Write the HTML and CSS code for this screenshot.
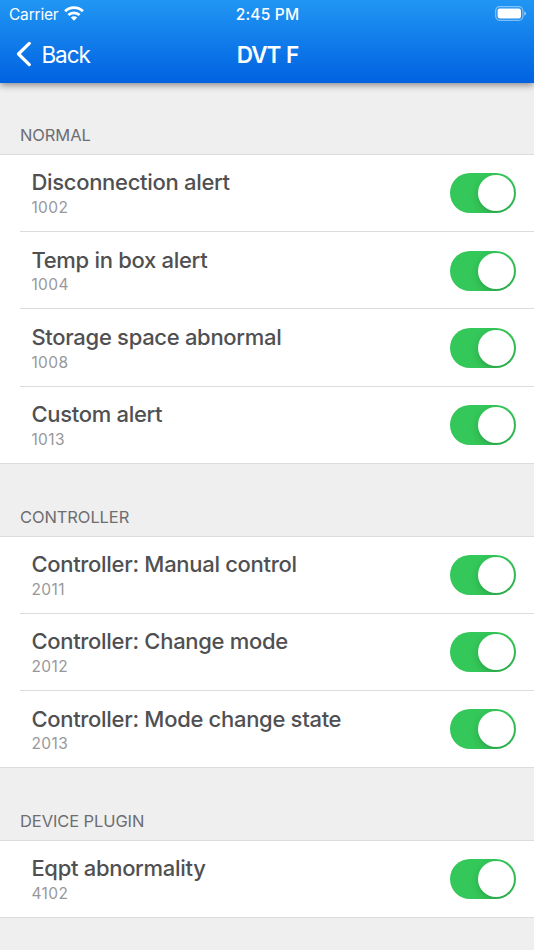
FILE: index.html
```html
<!DOCTYPE html>
<html lang="en">
<head>
<meta charset="utf-8">
<meta name="viewport" content="width=device-width, initial-scale=1">
<title>DVT F</title>
<link rel="stylesheet" href="styles.css">
</head>
<body>
<header class="top">
  <div class="status">
    <div class="carrier"><span class="carrier-name">Carrier</span>
      <svg class="wifi" width="20" height="15" viewBox="0 0 20 15" fill="none" stroke="#fff" stroke-width="2.8"><path d="M1.1 5.3a12.7 12.7 0 0 1 17.8 0"/><path d="M4.4 9.1a8.1 8.1 0 0 1 11.2 0"/><path d="M10 14.7L6.8 11.6a4.6 4.6 0 0 1 6.4 0z" fill="#fff" stroke="none"/></svg>
    </div>
    <div class="time">2:45 PM</div>
    <svg class="battery" width="32" height="15" viewBox="0 0 32 15"><rect x=".7" y=".7" width="27.2" height="13.6" rx="4" fill="none" stroke="#fff" stroke-opacity=".45" stroke-width="1.2"/><rect x="2.6" y="2.6" width="23.4" height="9.8" rx="2.2" fill="#fff"/><path d="M29.2 5.2q2 .7 2 2.3t-2 2.3z" fill="#fff" fill-opacity=".5"/></svg>
  </div>
  <nav class="nav">
    <a class="back"><svg width="16" height="26" viewBox="0 0 16 26" fill="none" stroke="#fff" stroke-width="3.2" stroke-linecap="round" stroke-linejoin="round"><path d="M14.3 2.4L3.5 13l10.8 10.6"/></svg><span class="back-label">Back</span></a>
    <h1 class="title">DVT F</h1>
  </nav>
</header>
<main>
  <section>
    <h2 class="heading first">NORMAL</h2>
    <ul class="list">
      <li class="row"><div class="info"><p class="name">Disconnection alert</p><p class="code">1002</p></div><span class="switch"></span></li>
      <li class="row"><div class="info"><p class="name">Temp in box alert</p><p class="code">1004</p></div><span class="switch"></span></li>
      <li class="row"><div class="info"><p class="name">Storage space abnormal</p><p class="code">1008</p></div><span class="switch"></span></li>
      <li class="row"><div class="info"><p class="name">Custom alert</p><p class="code">1013</p></div><span class="switch"></span></li>
    </ul>
  </section>
  <section>
    <h2 class="heading">CONTROLLER</h2>
    <ul class="list">
      <li class="row"><div class="info"><p class="name">Controller: Manual control</p><p class="code">2011</p></div><span class="switch"></span></li>
      <li class="row"><div class="info"><p class="name">Controller: Change mode</p><p class="code">2012</p></div><span class="switch"></span></li>
      <li class="row"><div class="info"><p class="name">Controller: Mode change state</p><p class="code">2013</p></div><span class="switch"></span></li>
    </ul>
  </section>
  <section>
    <h2 class="heading">DEVICE PLUGIN</h2>
    <ul class="list">
      <li class="row"><div class="info"><p class="name">Eqpt abnormality</p><p class="code">4102</p></div><span class="switch"></span></li>
    </ul>
  </section>
</main>
</body>
</html>
```
FILE: styles.css
```css
* { box-sizing: border-box; margin: 0; padding: 0; }
body {
  height: 950px;
  overflow: hidden;
  background: #efefef;
  font-family: Inter, "Liberation Sans", sans-serif;
}
.top {
  position: relative;
  height: 83px;
  color: #fff;
  background: linear-gradient(#2196f3, #0062e1);
  box-shadow: 0 2px 7px rgba(0, 0, 0, .45);
}
.status {
  display: grid;
  grid-template-columns: 1fr auto 1fr;
  align-items: center;
  height: 27px;
  padding: 0 7px 0 9px;
}
.carrier { display: flex; align-items: center; gap: 6px; }
.carrier-name { margin-top: 1px; font-size: 15.5px; letter-spacing: -.2px; }
.wifi { margin-bottom: 1px; }
.time { font-size: 15.5px; font-weight: 500; letter-spacing: .2px; margin: 1px 1px 0 0; }
.battery { justify-self: end; }
.nav {
  display: grid;
  grid-template-columns: 1fr auto 1fr;
  align-items: center;
  height: 54px;
  padding: 0 14.5px;
}
.back { display: flex; align-items: center; gap: 11px; }
.back-label { font-size: 22.5px; letter-spacing: -1.1px; }
.title { padding-left: 1px; font-size: 22.5px; font-weight: 600; letter-spacing: -1px; word-spacing: 1px; }
.heading {
  height: 71.5px;
  padding: 43px 20px 0;
  color: #6d6d72;
  font-size: 16.5px;
  font-weight: 400;
  line-height: 21px;
  letter-spacing: -.1px;
}
.first { height: 71px; padding-top: 42px; }
.list {
  list-style: none;
  background: #fff;
  border-top: 1px solid #dcdcde;
  border-bottom: 1px solid #dcdcde;
}
.row {
  display: flex;
  align-items: center;
  justify-content: space-between;
  height: 77.3px;
  margin-left: 20px;
  padding: 0 18px 0 11.4px;
}
.row:first-child { height: 76.2px; }
.row + .row { border-top: 1px solid #dcdcde; }
.info { padding-top: 2.4px; }
.name {
  color: #505052;
  font-size: 22px;
  font-weight: 500;
  line-height: 27.6px;
  letter-spacing: -.3px;
}
.code {
  color: #98989a;
  font-size: 15.5px;
  line-height: 22px;
  letter-spacing: .4px;
}
.switch {
  width: 66px;
  height: 40px;
  padding: 2px;
  border-radius: 20px;
  background: #34c759;
  overflow: hidden;
}
.row + .row .switch { margin-top: .5px; }
.switch::before {
  content: "";
  display: block;
  width: 36px;
  height: 36px;
  margin-left: auto;
  border-radius: 50%;
  background: #fff;
  box-shadow: 0 3px 8px rgba(0, 0, 0, .15), 0 2px 2px rgba(0, 0, 0, .05);
}
```
